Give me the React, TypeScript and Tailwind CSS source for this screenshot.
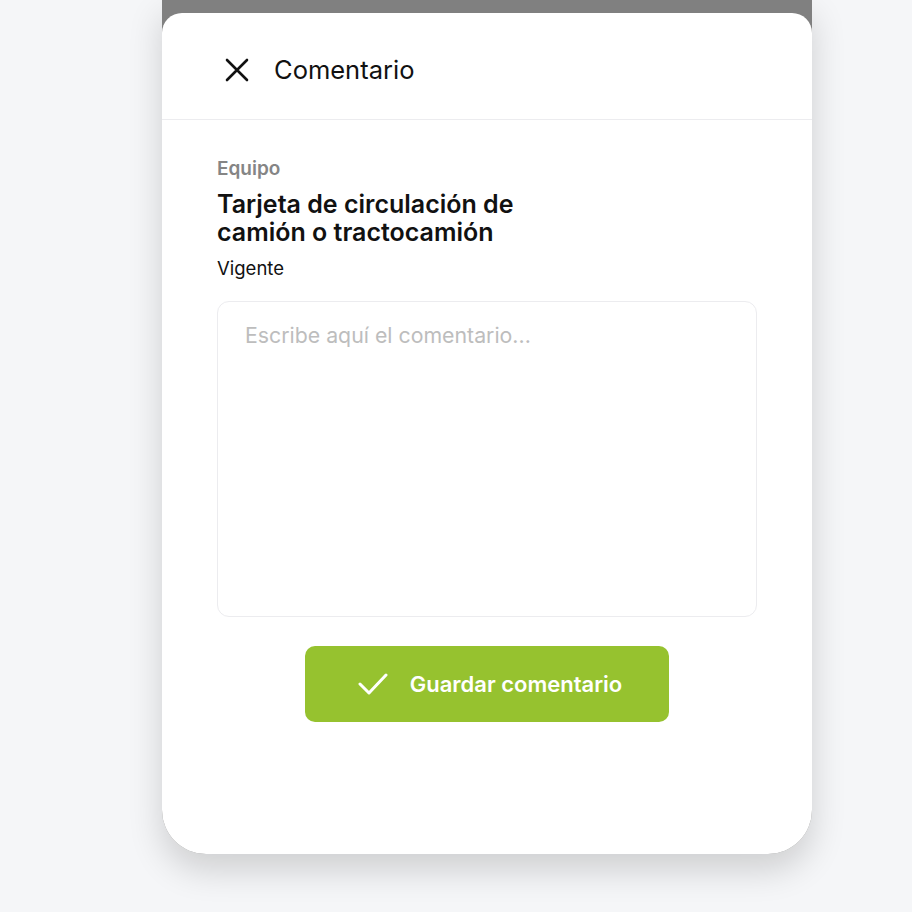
import React from "react";

export default function App() {
  return (
    <div
      className="w-[912px] h-[912px] bg-[#f5f6f8] flex pl-[162px]"
      style={{ fontFamily: "Inter, 'Noto Sans', sans-serif" }}
    >
      <div className="w-[650px] h-[854px] bg-[#808080] rounded-b-[44px] overflow-hidden flex flex-col pt-[13px] shadow-[0_16px_34px_rgba(0,0,0,0.16)]">
        <div className="flex-1 bg-white rounded-t-[20px] flex flex-col">
          <div className="h-[107px] border-b border-[#ececef] flex items-center pl-[63px] pt-[7px]">
            <svg width="24" height="24" viewBox="0 0 24 24" fill="none" stroke="#111" strokeWidth="2.6" strokeLinecap="round">
              <path d="M2 2 L22 22 M22 2 L2 22" />
            </svg>
            <span className="ml-[25px] text-[25.5px] text-[#111] leading-none">Comentario</span>
          </div>
          <div className="px-[55px] pt-[38px] flex flex-col">
            <div className="text-[19px] font-semibold text-[#858585] leading-[22px]">Equipo</div>
            <div className="mt-[10px] text-[25px] font-semibold text-[#111] leading-[28px] w-[330px]">
              Tarjeta de circulación de camión o tractocamión
            </div>
            <div className="mt-[11px] text-[18.5px] text-[#111] leading-[22px]">Vigente</div>
            <div className="mt-[22px] h-[316px] border border-[#ececef] rounded-[12px] px-[27px] pt-[20px]">
              <div className="text-[21.3px] text-[#bdbdbd] leading-[26px]">Escribe aquí el comentario...</div>
            </div>
            <div className="mt-[29px] flex justify-center">
              <button className="w-[364px] h-[76px] rounded-[10px] bg-[#96c22f] flex items-center justify-center gap-[22px] pl-[6px]">
                <svg width="30" height="24" viewBox="0 0 30 24" fill="none" stroke="#fff" strokeWidth="3" strokeLinecap="round" strokeLinejoin="round">
                  <path d="M2 12 L11 21 L28 3" />
                </svg>
                <span className="text-[22px] font-semibold text-white leading-none">Guardar comentario</span>
              </button>
            </div>
          </div>
        </div>
      </div>
    </div>
  );
}
